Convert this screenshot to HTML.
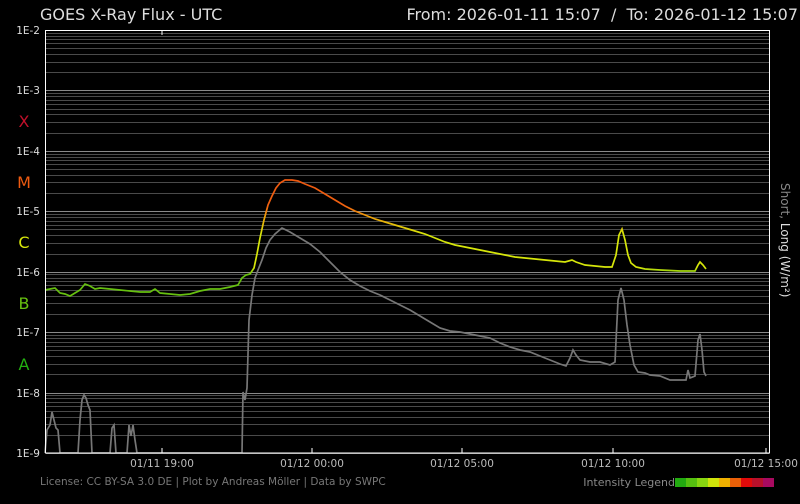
<!DOCTYPE html>
<html><head><meta charset="utf-8"><style>
html,body{margin:0;padding:0;background:#000;}
body{width:800px;height:500px;overflow:hidden;font-family:"DejaVu Sans","Liberation Sans",sans-serif;}
</style></head><body>
<svg width="800" height="500" viewBox="0 0 800 500" xmlns="http://www.w3.org/2000/svg" font-family="DejaVu Sans, Liberation Sans, sans-serif">
<rect width="800" height="500" fill="#000"/>
<text x="40" y="20" fill="#ddd" font-size="16">GOES X-Ray Flux - UTC</text>
<text x="798" y="20" fill="#ddd" font-size="16" text-anchor="end">From: 2026-01-11 15:07&#160;&#160;/&#160;&#160;To: 2026-01-12 15:07</text>
<g id="grid" stroke-width="1"></g>
<g id="ylab" fill="#ddd" font-size="10.5" text-anchor="end">
<text x="40" y="34">1E-2</text><text x="40" y="94">1E-3</text><text x="40" y="155">1E-4</text><text x="40" y="215">1E-5</text><text x="40" y="276">1E-6</text><text x="40" y="336">1E-7</text><text x="40" y="397">1E-8</text><text x="40" y="457">1E-9</text>
</g>
<g font-size="16" text-anchor="middle">
<text x="24" y="127" fill="#c0102a">X</text>
<text x="24" y="188" fill="#ee5a10">M</text>
<text x="24" y="248" fill="#d6e60a">C</text>
<text x="24" y="309" fill="#66c010">B</text>
<text x="24" y="370" fill="#22b010">A</text>
</g>
<g fill="#bbb" font-size="10.5" text-anchor="middle">
<text x="162" y="467">01/11 19:00</text><text x="312" y="467">01/12 00:00</text><text x="462" y="467">01/12 05:00</text><text x="613" y="467">01/12 10:00</text><text x="766" y="467">01/12 15:00</text>
</g>
<text x="40" y="485" fill="#777" font-size="10.5">License: CC BY-SA 3.0 DE | Plot by Andreas Möller | Data by SWPC</text>
<text x="675" y="486" fill="#888" font-size="11" text-anchor="end">Intensity Legend</text>
<g>
<rect x="675" y="478" width="11" height="9" fill="#22aa10"/><rect x="686" y="478" width="11" height="9" fill="#55c010"/><rect x="697" y="478" width="11" height="9" fill="#88d610"/><rect x="708" y="478" width="11" height="9" fill="#d0e40a"/><rect x="719" y="478" width="11" height="9" fill="#f0b000"/><rect x="730" y="478" width="11" height="9" fill="#ea6008"/><rect x="741" y="478" width="11" height="9" fill="#e00a0a"/><rect x="752" y="478" width="11" height="9" fill="#b8102a"/><rect x="763" y="478" width="11" height="9" fill="#a80a60"/>
</g>
<text transform="translate(781,183) rotate(90)" font-size="12"><tspan fill="#888">Short, </tspan><tspan fill="#ddd">Long (W/m²)</tspan></text>
<defs>
<linearGradient id="lg" gradientUnits="userSpaceOnUse" x1="0" y1="151" x2="0" y2="333">
<stop offset="0" stop-color="#e85010"/><stop offset="0.3" stop-color="#f06010"/><stop offset="0.36" stop-color="#f0a008"/><stop offset="0.46" stop-color="#d6e60a"/><stop offset="0.64" stop-color="#d6e60a"/><stop offset="0.68" stop-color="#66c010"/><stop offset="1" stop-color="#66c010"/>
</linearGradient>
</defs>
<polyline fill="none" stroke="#777" stroke-width="1.7" points="45,453 47,430 50,425 52,412 54,420 56,428 58,430 60,453 78,453 80,420 82,400 84,395 86,398 88,405 90,410 92,453 110,453 112,428 114,425 116,453 127,453 129,425 131,436 133,425 135,440 137,453 242,453 243,392 245,400 247,388 249,320 252,295 255,278 258,270 262,260 266,248 270,240 275,234 282,228 290,232 300,238 310,244 320,252 330,262 340,272 350,280 360,286 370,291 380,295 390,300 400,305 410,310 420,316 430,322 440,328 450,331 460,332 470,334 480,336 490,338 500,343 510,347 520,350 530,352 540,356 550,360 560,364 566,366 570,358 573,350 576,355 580,360 590,362 600,362 610,365 615,362 618,300 621,288 624,300 627,325 630,345 634,365 638,372 645,373 650,375 660,376 670,380 680,380 686,380 688,370 690,378 695,376 698,340 700,334 702,350 704,372 706,376"/>
<polyline fill="none" stroke="url(#lg)" stroke-width="1.7" points="45,290 50,289 55,288 60,293 65,294 70,296 75,293 80,290 85,284 90,286 95,289 100,288 110,289 120,290 130,291 140,292 150,292 155,289 160,293 170,294 180,295 190,294 200,291 210,289 220,289 230,287 238,285 242,278 246,275 250,274 254,268 257,254 260,238 264,220 268,205 272,196 276,188 280,183 285,180 292,180 298,181 305,184 315,188 325,194 335,200 345,206 355,211 365,215 375,219 385,222 395,225 405,228 415,231 425,234 435,238 445,242 455,245 465,247 475,249 485,251 495,253 505,255 515,257 525,258 535,259 545,260 555,261 565,262 572,260 576,262 585,265 595,266 605,267 612,267 616,255 619,235 622,229 625,240 628,255 631,263 636,267 645,269 660,270 680,271 695,271 698,265 700,262 703,265 706,269"/>
<rect x="45.5" y="30.5" width="724" height="422.5" fill="none" stroke="#fff" stroke-width="1"/>
<g stroke="#fff"><line x1="162" y1="30" x2="162" y2="35"/><line x1="162" y1="448" x2="162" y2="453"/><line x1="312" y1="448" x2="312" y2="453"/><line x1="462" y1="448" x2="462" y2="453"/><line x1="613" y1="448" x2="613" y2="453"/><line x1="766" y1="448" x2="766" y2="453"/></g>
</svg>
<script>
var g=document.getElementById('grid'),ns="http://www.w3.org/2000/svg";
var top0=30,dec=60.43;
for(var d=0;d<7;d++){for(var k=1;k<=10;k++){var y=top0+dec*(d+1)-Math.log10(k)*dec;if(k==10&&d>0)continue;
var l=document.createElementNS(ns,'line');l.setAttribute('x1',46);l.setAttribute('x2',769);l.setAttribute('y1',Math.round(y)+0.5);l.setAttribute('y2',Math.round(y)+0.5);
l.setAttribute('stroke',k==1?'#888':'#4a4a4a');g.appendChild(l);}}
</script>
</body></html>
